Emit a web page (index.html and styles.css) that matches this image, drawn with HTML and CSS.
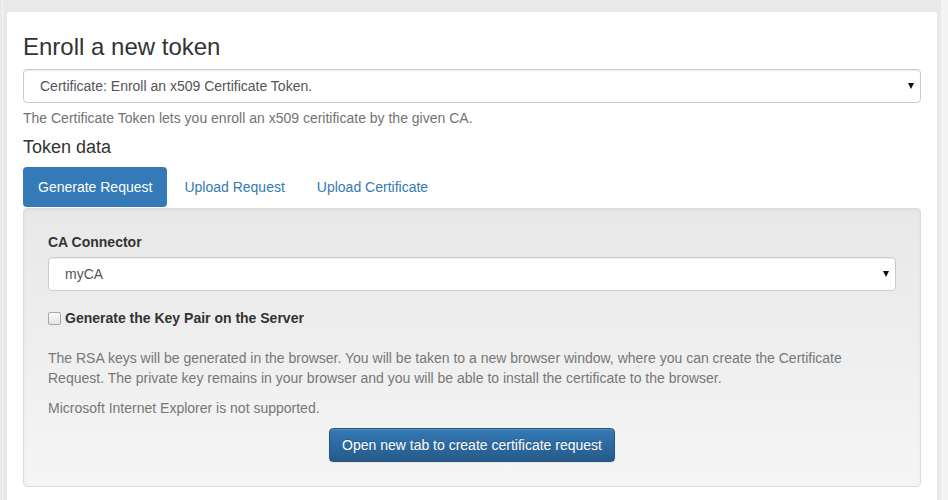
FILE: index.html
```html
<!DOCTYPE html>
<html lang="en">
<head>
<meta charset="utf-8">
<title>Enroll a new token</title>
<link rel="stylesheet" href="styles.css">
</head>
<body>
<div class="frame">
  <main class="card">
    <h3 class="title">Enroll a new token</h3>
    <div class="select-wrap">
      <select class="form-control">
        <option>Certificate: Enroll an x509 Certificate Token.</option>
      </select>
    </div>
    <p class="help">The Certificate Token lets you enroll an x509 ceritificate by the given CA.</p>
    <h4 class="subtitle">Token data</h4>
    <ul class="pills">
      <li class="pill active"><a>Generate Request</a></li>
      <li class="pill"><a>Upload Request</a></li>
      <li class="pill"><a>Upload Certificate</a></li>
    </ul>
    <section class="well">
      <label class="field-label">CA Connector</label>
      <div class="select-wrap">
        <select class="form-control">
          <option>myCA</option>
        </select>
      </div>
      <label class="checkbox">
        <input type="checkbox">
        <span>Generate the Key Pair on the Server</span>
      </label>
      <p class="info">The RSA keys will be generated in the browser. You will be taken to a new browser window, where you can create the Certificate Request. The private key remains in your browser and you will be able to install the certificate to the browser.</p>
      <p class="info">Microsoft Internet Explorer is not supported.</p>
      <div class="actions">
        <button class="btn" type="button">Open new tab to create certificate request</button>
      </div>
    </section>
  </main>
</div>
</body>
</html>
```

FILE: styles.css
```css
* { box-sizing: border-box; }

html, body {
  margin: 0;
  padding: 0;
  background: #e9e9e9;
  height: 100%;
  overflow: hidden;
}

body {
  font-family: "Liberation Sans", Arial, sans-serif;
  font-size: 14px;
  line-height: 20px;
  color: #333;
}

.frame {
  margin-left: 2px;
  border-left: 1px solid #f4f4f4;
  border-right: 7px solid #f4f4f4;
  padding: 12px 4px 0 4px;
  height: 100%;
}

.card {
  background: #fff;
  border-radius: 4px 4px 0 0;
  padding: 22px 16px 0 16px;
  height: 488px;
}

.title {
  margin: 0 0 9px 0;
  font-size: 24px;
  line-height: 26px;
  font-weight: 500;
  color: #333;
}

.select-wrap {
  position: relative;
}

.select-wrap::after {
  content: "";
  position: absolute;
  right: 7px;
  top: 14px;
  border-left: 3.5px solid transparent;
  border-right: 3.5px solid transparent;
  border-top: 6px solid #111;
  pointer-events: none;
}

.form-control {
  display: block;
  width: 100%;
  height: 34px;
  padding: 0 20px 0 16px;
  font-family: inherit;
  font-size: 14px;
  color: #555;
  background: #fff;
  border: 1px solid #ccc;
  border-radius: 4px;
  box-shadow: inset 0 1px 1px rgba(0,0,0,.075);
  -webkit-appearance: none;
  appearance: none;
  outline: none;
}

.help {
  margin: 5px 0 0 0;
  color: #737373;
}

.subtitle {
  margin: 9px 0 10px 0;
  font-size: 18px;
  line-height: 20px;
  font-weight: 500;
  color: #333;
}

.pills {
  list-style: none;
  margin: 0;
  padding: 0;
  display: flex;
}

.pill + .pill { margin-left: 2px; }

.pill a {
  display: block;
  padding: 10px 15px;
  color: #337ab7;
  border-radius: 4px;
  cursor: pointer;
}

.pill.active a {
  background: #337ab7;
  color: #fff;
}

.well {
  margin-top: 1px;
  padding: 23px 24px 24px 24px;
  border: 1px solid #dcdcdc;
  border-radius: 4px;
  background-image: linear-gradient(to bottom, #e8e8e8 0, #f5f5f5 100%);
  box-shadow: inset 0 1px 3px rgba(0,0,0,.05), 0 1px 0 rgba(255,255,255,.1);
}

.field-label {
  display: block;
  font-weight: bold;
  margin-bottom: 5px;
}

.checkbox {
  display: flex;
  align-items: center;
  margin-top: 17px;
  font-weight: bold;
  height: 20px;
}

.checkbox input {
  -webkit-appearance: none;
  appearance: none;
  margin: 0 4px 0 0;
  width: 13px;
  height: 13px;
  border: 1px solid #a6a6a6;
  border-radius: 2px;
  background-image: linear-gradient(to bottom, #fcfcfc 0, #e4e4e4 100%);
}

.info {
  margin: 0 0 10px 0;
  color: #777;
}

.checkbox + .info { margin-top: 20px; }

.actions {
  text-align: center;
}

.btn {
  display: inline-block;
  height: 34px;
  padding: 6px 12px;
  font-family: inherit;
  font-size: 14px;
  line-height: 20px;
  color: #fff;
  border: 1px solid #245580;
  border-radius: 4px;
  background-image: linear-gradient(to bottom, #337ab7 0, #265a88 100%);
  text-shadow: 0 -1px 0 rgba(0,0,0,.2);
  box-shadow: inset 0 1px 0 rgba(255,255,255,.15), 0 1px 1px rgba(0,0,0,.075);
  cursor: pointer;
}
```
